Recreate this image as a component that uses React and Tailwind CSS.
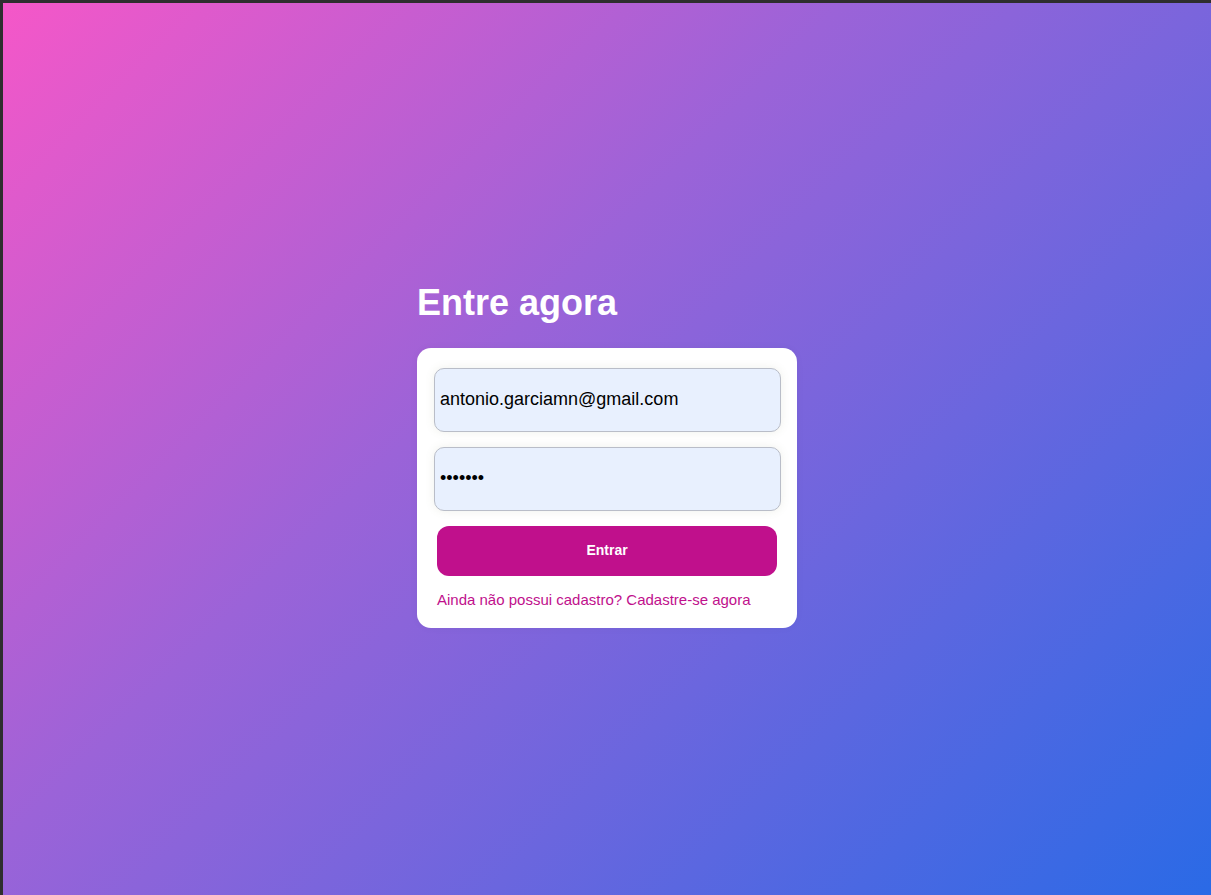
export default function App() {
  return (
    <div className="h-[895px] w-full bg-[#2e2e2e] pt-[3px] pl-[3px]">
      <div
        className="flex h-full w-full flex-col items-center justify-center bg-[linear-gradient(135deg,#f557c8_0%,#9b63d8_40%,#2a6ae6_100%)]"
        style={{ fontFamily: '"Liberation Sans", Arial, sans-serif' }}
      >
        <div className="w-[380px] pt-[11px]">
          <h1 className="mb-[24px] text-[36px] font-bold leading-[42px] text-white">Entre agora</h1>
          <form
            className="flex flex-col rounded-[14px] bg-white pt-[20px] pr-[16px] pb-[19px] pl-[17px] shadow-[0_0_8px_rgba(0,0,0,0.04)]"
            onSubmit={(e) => e.preventDefault()}
          >
            <input
              type="email"
              defaultValue="antonio.garciamn@gmail.com"
              className="h-[64px] w-[347px] rounded-[10px] border border-[#b9bdc8] bg-[#e8f0fe] px-[5px] text-[18px] text-black shadow-[0_0_10px_rgba(120,130,90,0.12)] outline-none"
            />
            <input
              type="password"
              defaultValue="1234567"
              className="mt-[15px] h-[64px] w-[347px] rounded-[10px] border border-[#b9bdc8] bg-[#e8f0fe] px-[5px] text-[18px] text-black shadow-[0_0_10px_rgba(120,130,90,0.12)] outline-none"
            />
            <button
              type="submit"
              className="mt-[15px] ml-[3px] h-[50px] w-[340px] rounded-[12px] bg-[#c0108c] text-[14px] font-bold text-white"
            >
              Entrar
            </button>
            <a href="#" className="mt-[15px] ml-[3px] text-[15px] leading-[18px] text-[#c0108c]">
              Ainda não possui cadastro? Cadastre-se agora
            </a>
          </form>
        </div>
      </div>
    </div>
  );
}
